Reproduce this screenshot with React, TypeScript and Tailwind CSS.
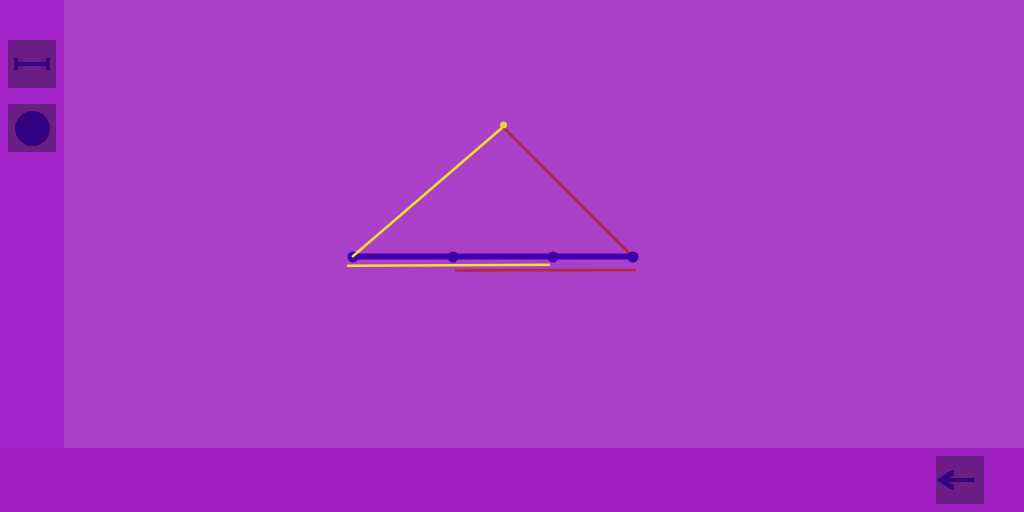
import React from 'react';

const Diagram = () => (
  <svg className="absolute left-0 top-0" width="960" height="448" viewBox="64 0 960 448" fill="none">
    <line x1="352" y1="257" x2="503" y2="127" stroke="#f5e02e" strokeWidth="2.5" />
    <line x1="503" y1="127" x2="632" y2="256" stroke="#a62a38" strokeWidth="2.5" />
    <line x1="353" y1="256.5" x2="633" y2="256.5" stroke="#4000b0" strokeWidth="6" />
    <circle cx="353" cy="257" r="5.5" fill="#3f00a8" />
    <circle cx="453" cy="257" r="5.5" fill="#3f00a8" />
    <circle cx="553" cy="257" r="5.5" fill="#3f00a8" />
    <circle cx="633" cy="257" r="5.5" fill="#3f00a8" />
    <line x1="352" y1="257" x2="362" y2="248.5" stroke="#f5e02e" strokeWidth="2.5" />
    <circle cx="503.5" cy="125" r="3.5" fill="#e8d040" />
    <line x1="347" y1="265.8" x2="550" y2="264.8" stroke="#f5e02e" strokeWidth="2.5" />
    <line x1="455" y1="270.5" x2="636" y2="270" stroke="#b3273c" strokeWidth="2.5" />
  </svg>
);

const ToolButton = ({ children }: { children: React.ReactNode }) => (
  <button className="w-12 h-12 bg-[#6b1f86] flex items-center justify-center">{children}</button>
);

export default function App() {
  return (
    <div className="w-[1024px] h-[512px] flex flex-col overflow-hidden">
      <div className="flex h-[448px]">
        <aside className="w-16 bg-[#a324c9] flex flex-col items-center pt-10 gap-4">
          <ToolButton>
            <svg width="48" height="48" viewBox="0 0 48 48">
              <rect x="6" y="18" width="4" height="12" fill="#330080" />
              <rect x="38" y="18" width="4" height="12" fill="#330080" />
              <rect x="10" y="22" width="28" height="4" fill="#330080" />
            </svg>
          </ToolButton>
          <ToolButton>
            <svg width="48" height="48" viewBox="0 0 48 48">
              <circle cx="24.5" cy="24.5" r="17.5" fill="#330080" />
            </svg>
          </ToolButton>
        </aside>
        <main className="relative flex-1 bg-[#ab40c8]">
          <Diagram />
        </main>
      </div>
      <footer className="h-16 bg-[#a020c4] flex justify-end items-center pr-10">
        <ToolButton>
          <svg width="48" height="48" viewBox="0 0 48 48" fill="none">
            <path d="M2 24h36" stroke="#330080" strokeWidth="4" />
            <path d="M18 16.5 C12 18 9 21 6 24 C9 27 12 30 18 31.5" stroke="#330080" strokeWidth="5" />
          </svg>
        </ToolButton>
      </footer>
    </div>
  );
}
